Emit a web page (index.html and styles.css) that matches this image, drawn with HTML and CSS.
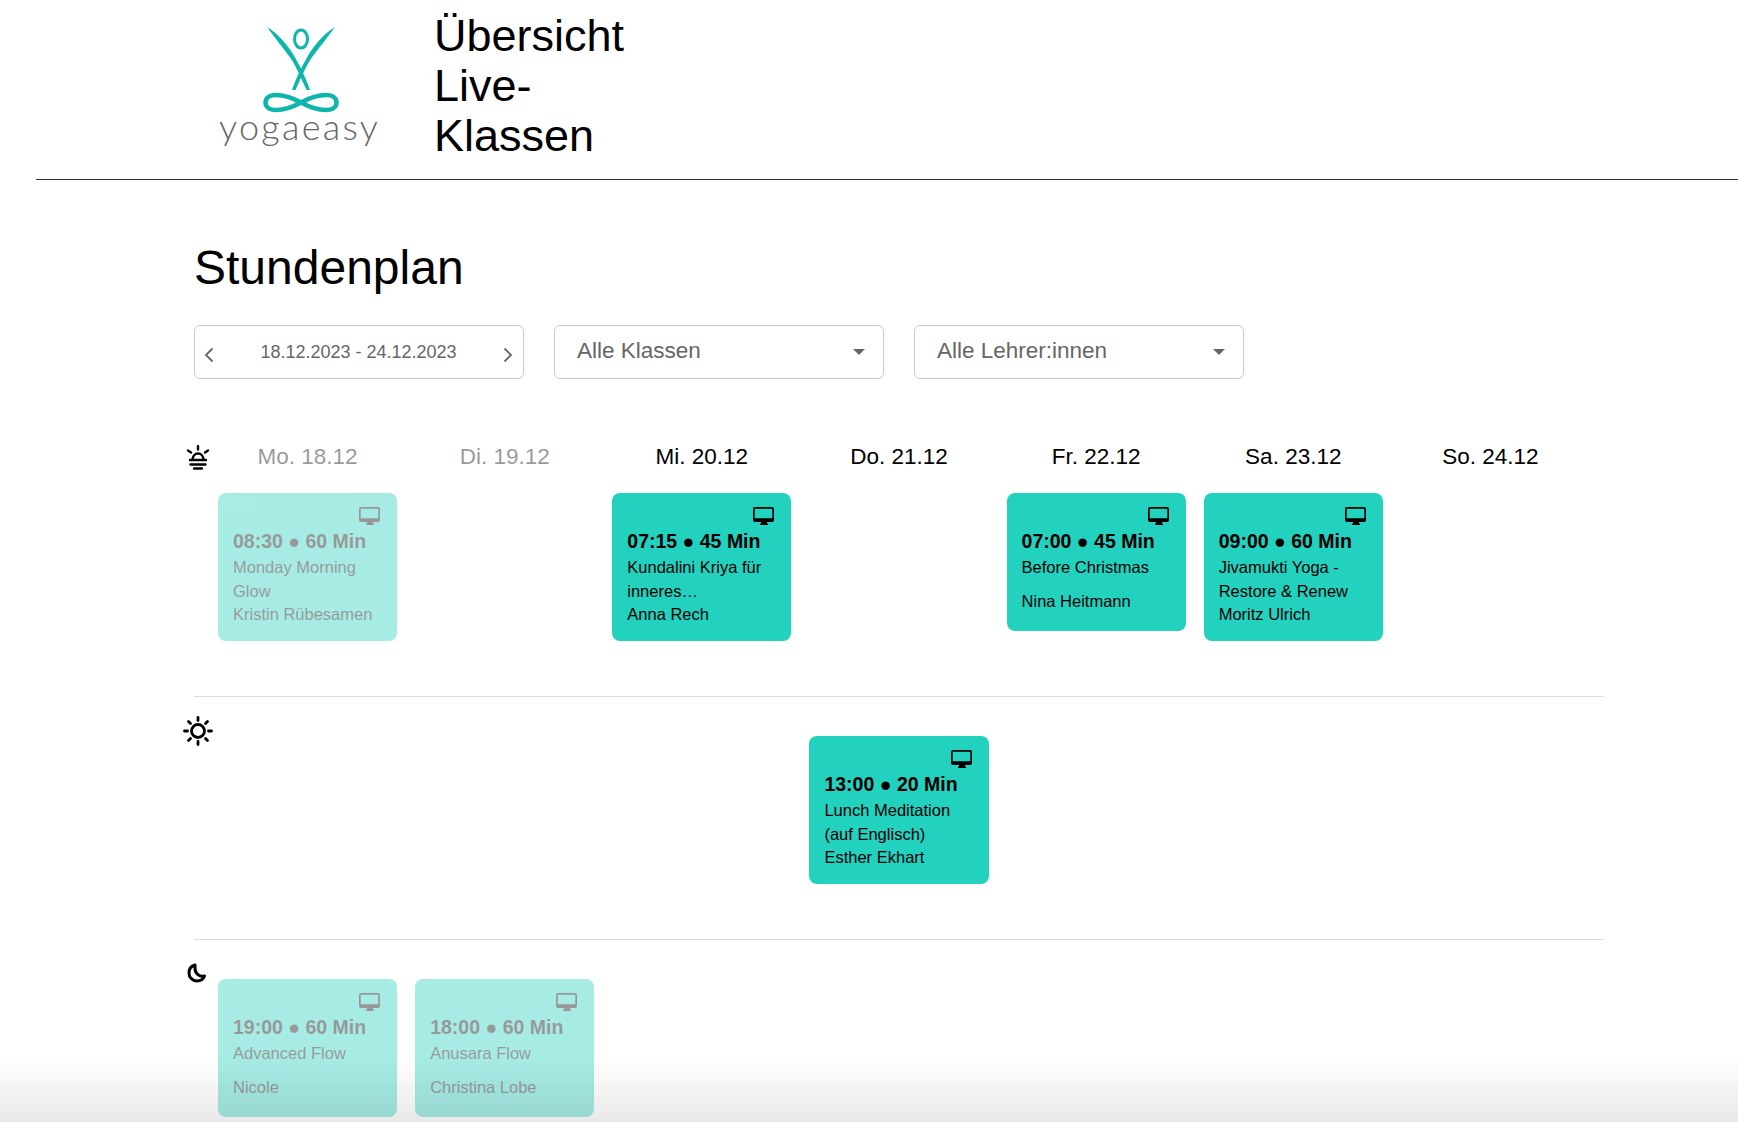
FILE: index.html
```html
<!DOCTYPE html>
<html lang="de">
<head>
    <meta charset="UTF-8">
    <meta name="viewport" content="width=device-width, initial-scale=1.0">
    <title>Übersicht Live-Klassen</title>
    <link rel="stylesheet" href="styles.css">
</head>
<body>
    <header class="site-header">
        <svg class="logo" viewBox="0 0 210 160" width="210" height="160">
            <path class="logo-fill" d="M87,27 C97,33 107,44 113,54 C119,64 126,78 130,90 L126.500,90 C122,80 116,66 110.500,58 C104,49 94,37 87,27 Z"/>
            <path class="logo-fill" d="M155,27 C145,33 135,44 129,54 C123,64 116,78 112,90 L115.500,90 C120,80 126,66 131.500,58 C138,49 148,37 155,27 Z"/>
            <ellipse class="logo-line head" cx="121" cy="39" rx="6.500" ry="9"/>
            <path class="logo-line loop" d="M121,102.500 C111,97 104,95 96,95 C89,95 85.500,98.500 85.500,102.500 C85.500,106.500 89,110 96,110 C104,110 111,108 121,102.500 C131,97 138,95 146,95 C153,95 156.500,98.500 156.500,102.500 C156.500,106.500 153,110 146,110 C138,110 131,108 121,102.500 Z"/>
            <text class="logo-text" x="39" y="140">yogaeasy</text>
        </svg>
        <h2 class="page-title">Übersicht Live-Klassen</h2>
    </header>

    <main class="schedule">
        <h1>Stundenplan</h1>

        <!-- Filter -->
        <div class="filters">
            <div class="filter date-filter">
                <svg class="chevron" viewBox="0 0 10 16" width="10" height="16"><path d="M8.500 1.500 2 8l6.500 6.500"/></svg>
                <span>18.12.2023 - 24.12.2023</span>
                <svg class="chevron" viewBox="0 0 10 16" width="10" height="16"><path d="M1.500 1.500 8 8l-6.500 6.500"/></svg>
            </div>
            <div class="filter select-filter"><span>Alle Klassen</span><i class="caret"></i></div>
            <div class="filter select-filter"><span>Alle Lehrer:innen</span><i class="caret"></i></div>
        </div>

        <!-- Morgen -->
        <section class="row row-morning">
            <svg class="row-icon icon-sunrise" viewBox="0 0 24 25" width="24" height="25">
                <path d="M12 1v3.500M2 5.500l3 2M22 5.500l-3 2M6.500 15C6.500 11 9 8.500 12 8.500s5.500 2.500 5.500 6.500M4 15h16M4.500 19.500h15M8 23.500h8"/>
            </svg>
            <div class="day-labels">
                <div class="day past">Mo. 18.12</div>
                <div class="day past">Di. 19.12</div>
                <div class="day">Mi. 20.12</div>
                <div class="day">Do. 21.12</div>
                <div class="day">Fr. 22.12</div>
                <div class="day">Sa. 23.12</div>
                <div class="day">So. 24.12</div>
            </div>
            <div class="days">
                <div class="slot">
                    <div class="card past">
                        <svg class="screen" viewBox="0 0 21 19" width="21" height="19"><use href="#screen"/></svg>
                        <div class="time">08:30 ● 60 Min</div>
                        <div class="name">Monday Morning Glow</div>
                        <div class="teacher">Kristin Rübesamen</div>
                    </div>
                </div>
                <div class="slot"></div>
                <div class="slot">
                    <div class="card">
                        <svg class="screen" viewBox="0 0 21 19" width="21" height="19"><use href="#screen"/></svg>
                        <div class="time">07:15 ● 45 Min</div>
                        <div class="name">Kundalini Kriya für inneres…</div>
                        <div class="teacher">Anna Rech</div>
                    </div>
                </div>
                <div class="slot"></div>
                <div class="slot">
                    <div class="card">
                        <svg class="screen" viewBox="0 0 21 19" width="21" height="19"><use href="#screen"/></svg>
                        <div class="time">07:00 ● 45 Min</div>
                        <div class="name">Before Christmas</div>
                        <div class="teacher">Nina Heitmann</div>
                    </div>
                </div>
                <div class="slot">
                    <div class="card">
                        <svg class="screen" viewBox="0 0 21 19" width="21" height="19"><use href="#screen"/></svg>
                        <div class="time">09:00 ● 60 Min</div>
                        <div class="name">Jivamukti Yoga - Restore &amp; Renew</div>
                        <div class="teacher">Moritz Ulrich</div>
                    </div>
                </div>
                <div class="slot"></div>
            </div>
        </section>

        <!-- Mittag -->
        <section class="row row-noon">
            <svg class="row-icon icon-sun" viewBox="0 0 30 30" width="30" height="30">
                <circle cx="15" cy="15" r="6.500"/>
                <path d="M15 1.500v3M15 25.500v3M1.500 15h3M25.500 15h3M5.500 5.500l2 2M22.500 22.500l2 2M5.500 24.500l2-2M22.500 7.500l2-2"/>
            </svg>
            <div class="days">
                <div class="slot"></div>
                <div class="slot"></div>
                <div class="slot"></div>
                <div class="slot">
                    <div class="card">
                        <svg class="screen" viewBox="0 0 21 19" width="21" height="19"><use href="#screen"/></svg>
                        <div class="time">13:00 ● 20 Min</div>
                        <div class="name">Lunch Meditation (auf Englisch)</div>
                        <div class="teacher">Esther Ekhart</div>
                    </div>
                </div>
                <div class="slot"></div>
                <div class="slot"></div>
                <div class="slot"></div>
            </div>
        </section>

        <!-- Abend -->
        <section class="row row-evening">
            <svg class="row-icon icon-moon" viewBox="0 0 20 20" width="20" height="20">
                <path d="M8 2C4.400 3 2 6.200 2 10c0 4.500 3.600 8 8 8 3.500 0 6.400-2 7.500-5-4.900 1.300-9.500-2.700-9.500-7.500 0-1.300 .2-2.400 0-3.500Z"/>
            </svg>
            <div class="days">
                <div class="slot">
                    <div class="card past">
                        <svg class="screen" viewBox="0 0 21 19" width="21" height="19"><use href="#screen"/></svg>
                        <div class="time">19:00 ● 60 Min</div>
                        <div class="name">Advanced Flow</div>
                        <div class="teacher">Nicole</div>
                    </div>
                </div>
                <div class="slot">
                    <div class="card past">
                        <svg class="screen" viewBox="0 0 21 19" width="21" height="19"><use href="#screen"/></svg>
                        <div class="time">18:00 ● 60 Min</div>
                        <div class="name">Anusara Flow</div>
                        <div class="teacher">Christina Lobe</div>
                    </div>
                </div>
                <div class="slot"></div>
                <div class="slot"></div>
                <div class="slot"></div>
                <div class="slot"></div>
                <div class="slot"></div>
            </div>
        </section>
    </main>

    <div class="bottom-fade"></div>

    <!-- Monitor-Icon -->
    <svg class="sprite" width="0" height="0">
        <symbol id="screen" viewBox="0 0 21 19">
            <path fill-rule="evenodd" d="M2 0h17a2 2 0 0 1 2 2v11a2 2 0 0 1-2 2h-5v1.500h1v1.500H7v-1.500h1V15H2a2 2 0 0 1-2-2V2a2 2 0 0 1 2-2Zm.3 1.700a.6 .6 0 0 0-.6 .6v8.900h17.600V2.300a.6 .6 0 0 0-.6-.6Z"/>
        </symbol>
    </svg>
</body>
</html>
```

FILE: styles.css
```css
html, body {
    height: 100%;
}
body {
    font-family: "Liberation Sans", Arial, sans-serif;
    background-color: #fff;
    color: #000;
    margin: 0;
    overflow: hidden;
}
.sprite {
    position: absolute;
}

/* Header */
.site-header {
    display: flex;
    height: 179px;
    margin-left: 36px;
    padding-left: 144px;
    border-bottom: 1px solid #333;
}
.logo {
    flex: none;
    margin-right: 44px;
}
.logo-fill {
    fill: #0db5ab;
}
.logo-line {
    fill: none;
    stroke: #0db5ab;
}
.head {
    stroke-width: 3;
}
.loop {
    stroke-width: 4.500;
}
.logo-text {
    font-family: Lato, sans-serif;
    font-size: 36px;
    font-weight: 300;
    letter-spacing: 2.300px;
    fill: #666;
}
.page-title {
    width: 220px;
    margin: 0;
    padding-top: 11px;
    font-size: 45px;
    font-weight: 400;
    line-height: 50px;
}

/* Stundenplan */
.schedule {
    width: 1410px;
    margin-left: 194px;
}
h1 {
    margin: 60px 0 29px;
    font-size: 48px;
    font-weight: 400;
    line-height: 56px;
}
.filters {
    display: flex;
    gap: 30px;
    margin-bottom: 62px;
}
.filter {
    display: flex;
    align-items: center;
    justify-content: space-between;
    box-sizing: border-box;
    width: 330px;
    height: 54px;
    border: 1px solid #ccc;
    border-radius: 6px;
    color: #666;
}
.date-filter {
    padding: 2px 10px 0 9px;
    font-size: 18px;
}
.date-filter span {
    margin-top: -1px;
}
.chevron {
    fill: none;
    stroke: #666;
    stroke-width: 1.800;
    margin-top: 3px;
}
.select-filter {
    padding: 0 18px 0 22px;
    font-size: 22.500px;
}
.select-filter span {
    margin-top: -2px;
}
.caret {
    width: 0;
    height: 0;
    border-left: 6px solid transparent;
    border-right: 6px solid transparent;
    border-top: 6px solid #666;
}

/* Zeilen */
.row {
    position: relative;
    padding: 0 15px;
    border-bottom: 1px solid #ddd;
}
.row:last-child {
    border-bottom: none;
}
.row-morning {
    height: 255px;
}
.row-noon {
    box-sizing: border-box;
    height: 243px;
    padding-top: 39px;
}
.row-evening {
    padding-top: 39px;
}
.row-icon {
    position: absolute;
    fill: none;
    stroke: #000;
}
.icon-sunrise {
    left: -8px;
    top: 4px;
    stroke-width: 2.400;
    stroke-linecap: round;
}
.icon-sun {
    left: -11px;
    top: 19px;
    stroke-width: 2.800;
    stroke-linecap: round;
}
.icon-moon {
    left: -7px;
    top: 23px;
    stroke-width: 3;
    stroke-linejoin: round;
}
.day-labels {
    display: grid;
    grid-template-columns: repeat(7, 1fr);
    padding-top: 1px;
    margin-bottom: 21px;
}
.day {
    font-size: 22.500px;
    line-height: 30px;
    text-align: center;
}
.day.past {
    opacity: .4;
}
.days {
    display: grid;
    grid-template-columns: repeat(7, 1fr);
}
.slot {
    padding: 0 9px;
}

/* Karten */
.card {
    box-sizing: border-box;
    min-height: 138px;
    padding: 14px 15px 14px;
    background-color: #23d1bf;
    border-radius: 8px;
    font-size: 16.500px;
    line-height: 23.700px;
}
.card.past {
    opacity: .4;
}
.screen {
    display: block;
    margin: 0 2px 0 auto;
    height: 19px;
}
.time {
    margin-top: 1px;
    font-size: 19.500px;
    font-weight: 700;
    line-height: 29px;
    white-space: nowrap;
}
.name {
    min-height: 34px;
}

/* Schatten am unteren Rand */
.bottom-fade {
    position: fixed;
    left: 0;
    right: 0;
    bottom: 0;
    height: 64px;
    background: linear-gradient(rgba(0, 0, 0, 0), rgba(0, 0, 0, .09));
    pointer-events: none;
}
```
